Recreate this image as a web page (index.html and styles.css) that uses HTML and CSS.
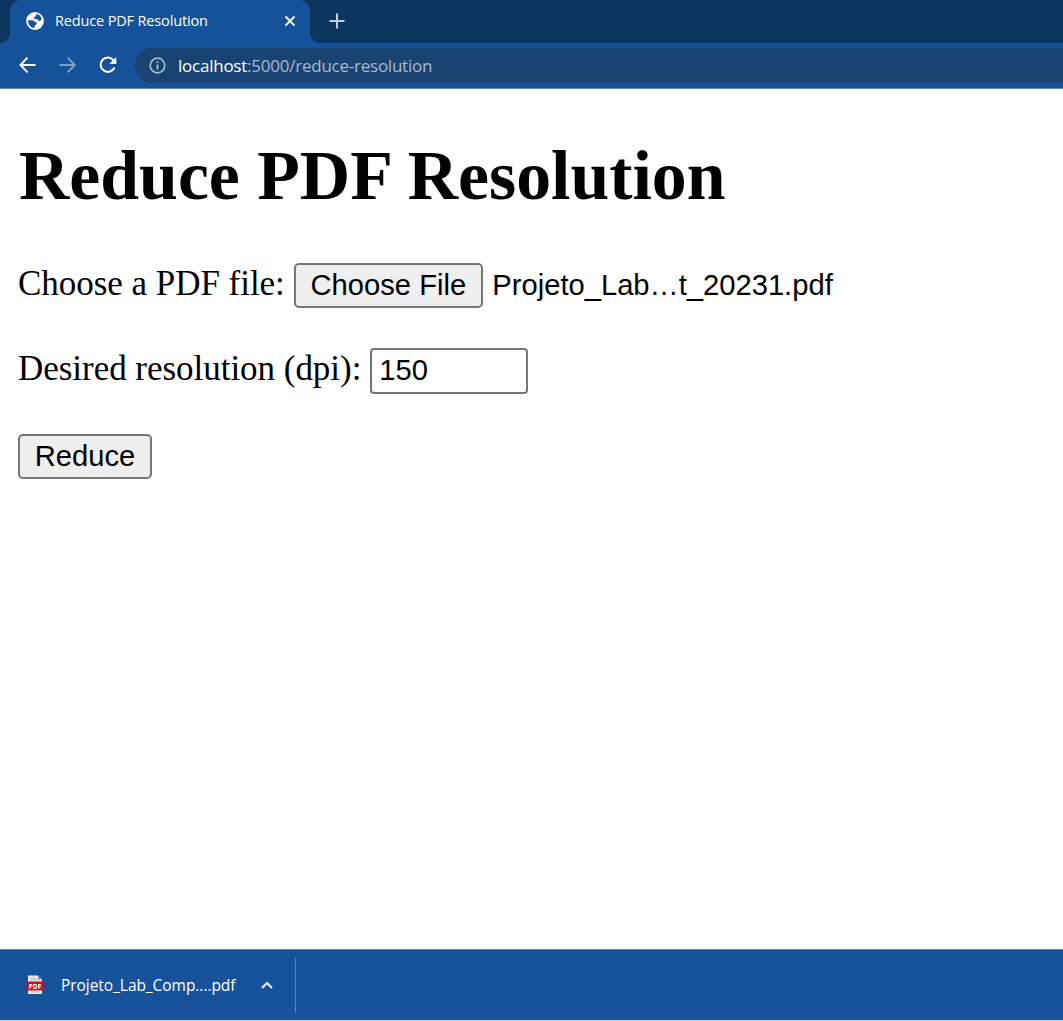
FILE: index.html
```html
<!DOCTYPE html>
<html lang="en">
<head>
<meta charset="utf-8">
<title>Reduce PDF Resolution</title>
<link rel="stylesheet" href="styles.css">
</head>
<body>
<div class="browser">
  <header class="tabstrip">
    <div class="edge"></div>
    <div class="tab">
      <svg width="18" height="18" viewBox="0 0 18 18"><circle cx="9" cy="9" r="8.9" fill="#fff"/><path d="M10.2 2.100C12.900 2.600 15 4.300 15.600 6.700C15.300 8.300 14 9 12.800 8.800C11.400 8.600 11.800 7.100 10.600 7L7.800 6.800C7.400 5.800 8 5.100 9.200 4.700C10.100 4.300 10.300 3.400 10.200 2.100ZM2.100 8.200L6.300 8.200C8 8.200 8.200 9.900 9.600 10.100C11.300 10.400 11.200 12.700 9.600 12.900C8.600 13.100 8.700 14.500 8.500 16C4.600 15.500 1.900 12.400 2.100 8.200Z" fill="#15529a"/></svg>
      <span class="tab-title">Reduce PDF Resolution</span>
      <svg class="close" width="12" height="12" viewBox="0 0 12 12"><path d="M1.500 1.500 10.500 10.500M10.500 1.500 1.500 10.500" stroke="#fff" stroke-width="1.800"/></svg>
    </div>
    <div class="strip-rest">
      <svg width="16" height="16" viewBox="0 0 16 16"><path d="M8 .5V15.500M.5 8H15.500" stroke="#c2cedf" stroke-width="2"/></svg>
    </div>
  </header>
  <nav class="toolbar">
    <svg width="18" height="18" viewBox="0 0 18 18"><path d="M16.500 9H2M8.500 1.700 1.500 9 8.500 16.300" fill="none" stroke="#fff" stroke-width="1.900"/></svg>
    <svg width="18" height="18" viewBox="0 0 18 18"><path d="M.5 9H15.500M8.500 1.700 15.800 9 8.500 16.300" fill="none" stroke="#7f9fc8" stroke-width="1.900"/></svg>
    <svg width="18" height="18" viewBox="0 0 18 18"><path d="M15.500 11.500A7.200 7.200 0 1 1 14.600 4.300" fill="none" stroke="#fff" stroke-width="2"/><path d="M17.300 1V8H10.300Z" fill="#fff"/></svg>
    <div class="address">
      <svg width="17" height="17" viewBox="0 0 17 17"><circle cx="8.500" cy="8.500" r="7.300" fill="none" stroke="#a9b9cd" stroke-width="1.700"/><path d="M8.500 7.600V12.600M8.500 4.300V6.100" stroke="#a9b9cd" stroke-width="1.900"/></svg>
      <span class="url"><b>localhost</b>:5000/reduce-resolution</span>
    </div>
  </nav>
  <main class="page">
    <h1>Reduce PDF Resolution</h1>
    <form>
      <div class="row file-row">
        <label for="choose">Choose a PDF file:</label>
        <button type="button" id="choose" class="btn choose">Choose File</button>
        <span class="filename">Projeto_Lab…t_20231.pdf</span>
      </div>
      <div class="row">
        <label for="dpi">Desired resolution (dpi):</label>
        <input id="dpi" class="dpi" type="text" value="150">
      </div>
      <button type="button" class="btn reduce">Reduce</button>
    </form>
  </main>
  <footer class="downloads">
    <div class="download">
      <svg width="18" height="20" viewBox="0 0 18 20"><path d="M2 .5H12L16 4.500V19H2Z" fill="#eef0f4"/><path d="M12 .5V4.500H16Z" fill="#6688b3"/><path d="M4 3H10M4 5H13M4 17H14" stroke="#aeb5c0"/><path d="M.5 6.500H17.500V15.500H.5Z" fill="#cf1020"/><text x="9" y="13.700" class="pdf">PDF</text></svg>
      <span class="download-name">Projeto_Lab_Comp....pdf</span>
      <svg class="caret" width="12" height="8" viewBox="0 0 12 8"><path d="M1 7 6 2 11 7" fill="none" stroke="#e8eef6" stroke-width="2"/></svg>
    </div>
  </footer>
</div>
</body>
</html>
```
FILE: styles.css
```css
* { box-sizing: border-box; }
body { margin: 0; background: #fff; overflow: hidden; }
svg { display: block; flex: none; }
.browser { width: 1063px; height: 1021px; display: flex; flex-direction: column; color: #000; }
.tabstrip { flex: none; height: 43px; display: flex; background: linear-gradient(#0c3560 0 20px, #15529a 20px); font-family: "Open Sans", sans-serif; }
.edge { width: 10px; background: #0c3560; border-bottom-right-radius: 10px; }
.tab { width: 300px; display: flex; align-items: center; padding: 0 14px 1px 16px; background: #15529a; border-radius: 10px 10px 0 0; }
.tab-title { margin-left: 11px; color: #fff; font-size: 14.5px; letter-spacing: -.15px; white-space: nowrap; line-height: 20px; }
.close { margin-left: auto; }
.strip-rest { flex: 1; display: flex; align-items: center; padding: 0 0 1px 19px; background: #0c3560; border-bottom-left-radius: 10px; }
.toolbar { flex: none; height: 46px; display: flex; align-items: center; gap: 22px; padding: 0 0 1px 19px; background: #15529a; border-bottom: 1px solid #6588ad; }
.address { flex: 1; height: 35px; margin-left: -4px; display: flex; align-items: center; padding-left: 14px; gap: 12px; background: #194373; border-radius: 18px 0 0 18px; }
.url { padding-top: 1px; color: #a9b9cd; font: 17px/24px "Open Sans", sans-serif; letter-spacing: -.24px; white-space: nowrap; }
.url b { color: #fff; font-weight: 400; }
.page { flex: 1; padding: 47px 18px 0; font-family: "Liberation Serif", serif; font-size: 35px; }
h1 { margin: 0 0 47px 1px; font-size: 69.75px; line-height: 80px; white-space: nowrap; }
.row { display: flex; height: 46px; margin-bottom: 39px; white-space: nowrap; }
.file-row { height: 45px; margin-bottom: 40px; }
label { line-height: 42px; letter-spacing: -.03px; }
.btn, .dpi, .filename { font-family: "Liberation Sans", sans-serif; font-size: 29.17px; color: #000; }
.btn { height: 45px; padding: 0 0 1px; background: #efefef; border: 2px solid #767676; border-radius: 5px; line-height: 40px; display: block; }
.choose { width: 189px; margin-left: 9px; }
.filename { margin-left: 9.5px; line-height: 44px; }
.dpi { width: 158px; height: 46px; margin-left: 9px; padding: 0 7px 2px; background: #fff; border: 2px solid #767676; border-radius: 4px; }
.reduce { width: 134px; margin-top: 40px; }
.downloads { flex: none; height: 72px; display: flex; align-items: center; background: #15529a; border-top: 1px solid #6588ad; border-bottom: 1px solid #c3cad2; }
.download { width: 296px; height: 55px; display: flex; align-items: center; padding-left: 26px; border-right: 1px solid #5e87b9; }
.download-name { margin-left: 17px; color: #fff; font: 15.5px/22px "Open Sans", sans-serif; letter-spacing: -.05px; white-space: nowrap; }
.caret { margin-left: auto; margin-right: 22px; }
.pdf { font: 700 6.5px "Open Sans", sans-serif; fill: #fff; text-anchor: middle; }
```
